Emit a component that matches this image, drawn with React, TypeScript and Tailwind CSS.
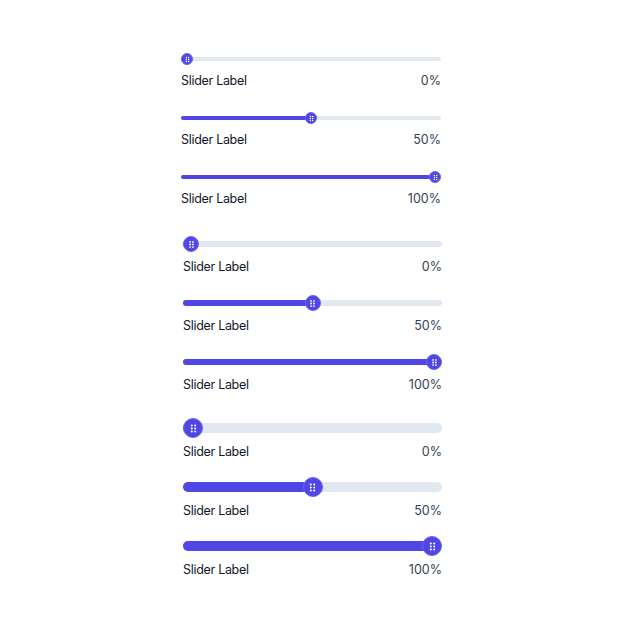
import React from "react";

type Size = {
  thumb: number;
  track: string;
  thumbClass: string;
  dots: number;
  labelGap: string;
  gap: string;
};

const sizes: Size[] = [
  { thumb: 12, track: "h-[4px]", thumbClass: "h-[12px] w-[12px]", dots: 9, labelGap: "mt-[8px]", gap: "gap-[23px]" },
  { thumb: 16, track: "h-[6px]", thumbClass: "h-[16px] w-[16px]", dots: 11, labelGap: "mt-[7px]", gap: "gap-[20px]" },
  { thumb: 20, track: "h-[10px]", thumbClass: "h-[20px] w-[20px]", dots: 13, labelGap: "mt-[6px]", gap: "gap-[17px]" },
];

const values = [0, 50, 100];

function Grip({ size }: { size: number }) {
  return (
    <svg width={size} height={size} viewBox="0 0 10 10" fill="white">
      {[3.7, 6.3].map((x) =>
        [2.7, 5, 7.3].map((y) => <circle key={`${x}-${y}`} cx={x} cy={y} r={0.8} />)
      )}
    </svg>
  );
}

function Slider({ value, size, width }: { value: number; size: Size; width: number }) {
  const travel = width - size.thumb;
  const left = (value / 100) * travel;
  return (
    <div className="flex flex-col">
      <div className="relative flex items-center" style={{ height: size.thumb }}>
        <div className={`w-full ${size.track} rounded-full bg-[#e2e8f0]`}>
          <div
            className="h-full rounded-full bg-[#4f46e5]"
            style={{ width: left + size.thumb / 2 }}
          />
        </div>
        <div
          className={`absolute top-0 ${size.thumbClass} flex items-center justify-center rounded-full border border-[#6d66f0] bg-[#4f46e5]`}
          style={{ left }}
        >
          <Grip size={size.dots} />
        </div>
      </div>
      <div className={`${size.labelGap} flex items-center justify-between text-[12.5px] leading-4`}>
        <span className="tracking-[-0.3px] text-[#0f172a]">Slider Label</span>
        <span className="text-[#334155]">{value}%</span>
      </div>
    </div>
  );
}

export default function App() {
  return (
    <div
      className="min-h-[626px] w-[626px] bg-white pt-[53px]"
      style={{ fontFamily: "Inter, 'Noto Sans', sans-serif" }}
    >
      <div className="ml-[181px] flex w-[262px] flex-col">
        <div className={`flex w-[260px] flex-col ${sizes[0].gap}`}>
          {values.map((v) => (
            <Slider key={v} value={v} size={sizes[0]} width={260} />
          ))}
        </div>
        <div className={`mt-[29px] ml-[2px] flex w-[259px] flex-col ${sizes[1].gap}`}>
          {values.map((v) => (
            <Slider key={v} value={v} size={sizes[1]} width={259} />
          ))}
        </div>
        <div className={`mt-[25px] ml-[2px] flex w-[259px] flex-col ${sizes[2].gap}`}>
          {values.map((v) => (
            <Slider key={v} value={v} size={sizes[2]} width={259} />
          ))}
        </div>
      </div>
    </div>
  );
}
